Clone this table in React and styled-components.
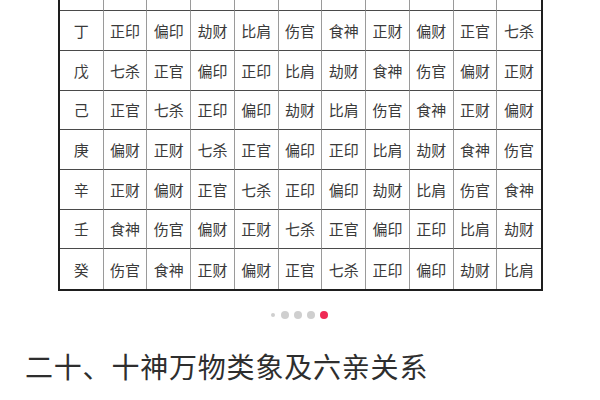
import React from 'react';
import styled, { createGlobalStyle } from 'styled-components';

const GlobalStyle = createGlobalStyle`
  html, body {
    margin: 0;
    padding: 0;
    background: #fff;
  }
  body {
    font-family: "Noto Sans CJK SC", "Noto Sans", sans-serif;
    width: 600px;
    height: 400px;
    overflow: hidden;
  }
`;

const Page = styled.div`
  width: 600px;
  height: 400px;
  display: flex;
  flex-direction: column;
`;

// the picture of the table is cut at the top, so we only see its lower part
const Frame = styled.div`
  height: 291px;
  overflow: hidden;
  display: flex;
  flex-direction: column;
  justify-content: flex-end;
  padding-left: 58px;
`;

const Grid = styled.div`
  width: 485px;
  box-sizing: border-box;
  display: grid;
  grid-template-columns: repeat(11, 1fr);
  grid-auto-rows: 39.7px;
  border-left: 2px solid #1e1e1e;
  border-right: 2px solid #1e1e1e;
  border-bottom: 2px solid #1e1e1e;
`;

const Cell = styled.div`
  box-sizing: border-box;
  display: flex;
  align-items: center;
  justify-content: center;
  font-size: 15px;
  color: #3a3a3a;
  border-right: ${(p) => (p.$lastCol ? 'none' : '1px solid #9a9a9a')};
  border-bottom: ${(p) => (p.$lastRow ? 'none' : '1px solid #4a4a4a')};
`;

const Dots = styled.div`
  margin-top: 20px;
  height: 8px;
  display: flex;
  align-items: center;
  justify-content: center;
  gap: 5px;
  padding-right: 2px;
`;

const Dot = styled.span`
  display: block;
  width: ${(p) => (p.$small ? '4px' : '8px')};
  height: ${(p) => (p.$small ? '4px' : '8px')};
  margin: ${(p) => (p.$small ? '0 1px' : '0')};
  border-radius: 50%;
  background: ${(p) => (p.$active ? '#ef2a55' : '#cfcfcf')};
`;

const Title = styled.h2`
  margin: 27px 0 0 25px;
  font-size: 28px;
  line-height: 40px;
  font-weight: 400;
  color: #2e2e2e;
  letter-spacing: 0.8px;
`;

const rows = [
  ['丙', '偏印', '正印', '比肩', '劫财', '食神', '伤官', '偏财', '正财', '七杀', '正官'],
  ['丁', '正印', '偏印', '劫财', '比肩', '伤官', '食神', '正财', '偏财', '正官', '七杀'],
  ['戊', '七杀', '正官', '偏印', '正印', '比肩', '劫财', '食神', '伤官', '偏财', '正财'],
  ['己', '正官', '七杀', '正印', '偏印', '劫财', '比肩', '伤官', '食神', '正财', '偏财'],
  ['庚', '偏财', '正财', '七杀', '正官', '偏印', '正印', '比肩', '劫财', '食神', '伤官'],
  ['辛', '正财', '偏财', '正官', '七杀', '正印', '偏印', '劫财', '比肩', '伤官', '食神'],
  ['壬', '食神', '伤官', '偏财', '正财', '七杀', '正官', '偏印', '正印', '比肩', '劫财'],
  ['癸', '伤官', '食神', '正财', '偏财', '正官', '七杀', '正印', '偏印', '劫财', '比肩'],
];

export default function App() {
  return (
    <Page>
      <GlobalStyle />
      <Frame>
        <Grid>
          {rows.map((row, r) =>
            row.map((text, c) => (
              <Cell
                key={r + '-' + c}
                $lastCol={c === row.length - 1}
                $lastRow={r === rows.length - 1}
              >
                {text}
              </Cell>
            ))
          )}
        </Grid>
      </Frame>
      <Dots>
        <Dot $small />
        <Dot />
        <Dot />
        <Dot />
        <Dot $active />
      </Dots>
      <Title>二十、十神万物类象及六亲关系</Title>
    </Page>
  );
}
